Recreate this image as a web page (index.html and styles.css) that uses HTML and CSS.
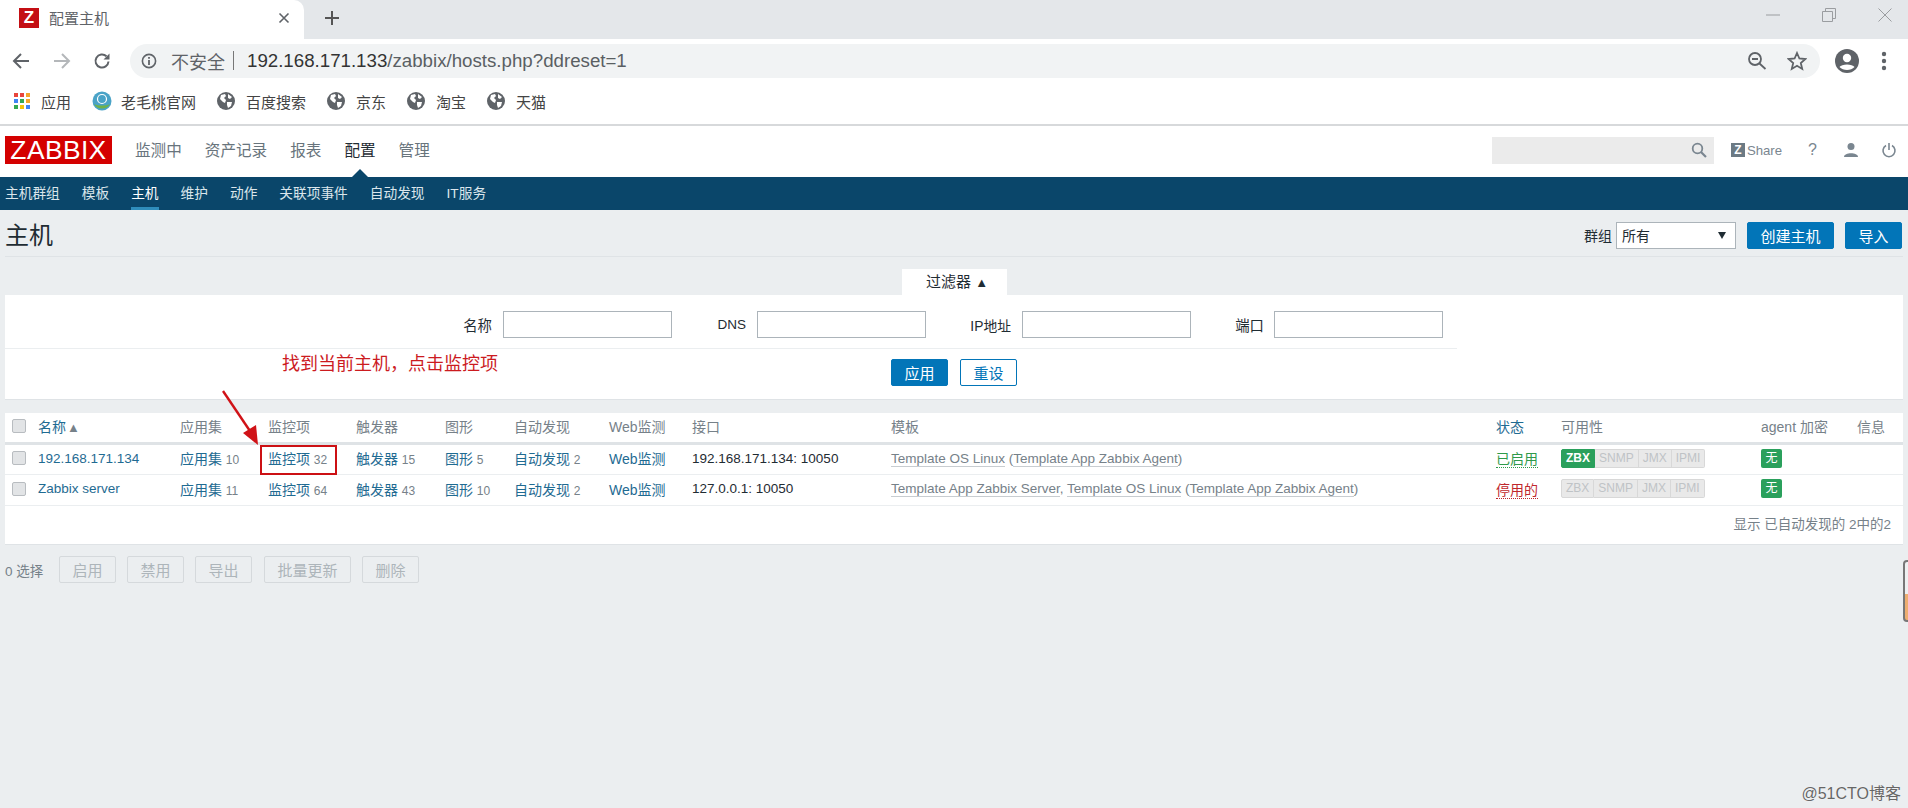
FILE: index.html
```html
<!DOCTYPE html>
<html lang="zh">
<head>
<meta charset="utf-8">
<title>配置主机</title>
<link rel="stylesheet" href="styles.css">
</head>
<body>
<div class="tabstrip">
  <div class="tab">
    <span class="favicon">Z</span>
    <span class="tab-title">配置主机</span>
    <svg class="tab-close" width="12" height="12" viewBox="0 0 12 12"><path d="M1.5 1.5l9 9M10.5 1.5l-9 9" stroke="#5f6368" stroke-width="1.6"/></svg>
  </div>
  <svg class="tab-new" width="16" height="16" viewBox="0 0 16 16"><path d="M8 1v14M1 8h14" stroke="#555" stroke-width="2"/></svg>
  <div class="win-controls">
    <svg width="14" height="14" viewBox="0 0 14 14"><path d="M0 7h14" stroke="#9a9da0" stroke-width="1"/></svg>
    <svg width="14" height="14" viewBox="0 0 14 14"><path d="M.5 3.500h10v10H.5zM3.500 3.500v-3h10v10h-3" fill="none" stroke="#9a9da0"/></svg>
    <svg width="14" height="14" viewBox="0 0 14 14"><path d="M.5.5l13 13M13.500.5l-13 13" stroke="#9a9da0"/></svg>
  </div>
</div>
<div class="toolbar">
  <svg class="tool" width="18" height="18" viewBox="0 0 18 18"><path d="M17 9H2M9 2L2 9l7 7" fill="none" stroke="#5f6368" stroke-width="2"/></svg>
  <svg class="tool" width="18" height="18" viewBox="0 0 18 18"><path d="M1 9h15M9 2l7 7-7 7" fill="none" stroke="#b4b7ba" stroke-width="2"/></svg>
  <svg class="tool" width="18" height="18" viewBox="0 0 18 18"><path d="M15.5 9.5a6.5 6.5 0 1 1-2-5.2" fill="none" stroke="#5f6368" stroke-width="2"/><path d="M16.5 1.5v6h-6z" fill="#5f6368"/></svg>
  <div class="omnibox">
    <svg width="16" height="16" viewBox="0 0 16 16"><circle cx="8" cy="8" r="6.6" fill="none" stroke="#5f6368" stroke-width="1.6"/><path d="M8 7v5M8 4v1.8" stroke="#5f6368" stroke-width="1.8"/></svg>
    <span class="insecure">不安全</span>
    <span class="omni-sep"></span>
    <span class="url">192.168.171.133<span class="url-path">/zabbix/hosts.php?ddreset=1</span></span>
    <svg class="omni-zoom" width="20" height="20" viewBox="0 0 20 20"><circle cx="8" cy="8" r="6" fill="none" stroke="#5f6368" stroke-width="1.8"/><path d="M5 8h6M12.5 12.5l6 5.5" stroke="#5f6368" stroke-width="1.8"/></svg>
    <svg class="omni-star" width="20" height="20" viewBox="0 0 20 20"><path d="M10 2l2.4 5.5 6 .5-4.6 4 1.4 5.9L10 14.800l-5.200 3.100L6.200 12 1.600 8l6-.5z" fill="none" stroke="#5f6368" stroke-width="1.800"/></svg>
  </div>
  <svg class="profile" width="24" height="24" viewBox="0 0 24 24"><circle cx="12" cy="12" r="12" fill="#5f6368"/><circle cx="12" cy="9" r="4.200" fill="#fff"/><path d="M4.500 18c2-3.500 13-3.500 15 0-3.500 4-11.500 4-15 0z" fill="#fff"/></svg>
  <svg class="kebab" width="6" height="20" viewBox="0 0 6 20"><circle cx="3" cy="3" r="2.200" fill="#5f6368"/><circle cx="3" cy="10" r="2.200" fill="#5f6368"/><circle cx="3" cy="17" r="2.200" fill="#5f6368"/></svg>
</div>
<div class="bookmarks">
  <span class="bm">
    <svg width="16" height="16" viewBox="0 0 16 16">
      <rect width="4" height="4" fill="#e8453c"/><rect x="6" width="4" height="4" fill="#e8453c"/><rect x="12" width="4" height="4" fill="#f4a62a"/>
      <rect y="6" width="4" height="4" fill="#3f84f4"/><rect x="6" y="6" width="4" height="4" fill="#34a853"/><rect x="12" y="6" width="4" height="4" fill="#f4a62a"/>
      <rect y="12" width="4" height="4" fill="#34a853"/><rect x="6" y="12" width="4" height="4" fill="#f4c20d"/><rect x="12" y="12" width="4" height="4" fill="#3f84f4"/>
    </svg>应用</span>
  <span class="bm">
    <svg width="20" height="20" viewBox="0 0 20 20"><circle cx="10" cy="10" r="9.500" fill="#4aa3c7"/><path d="M2 13c3 6 13 6 16 0-4 2-12 2-16 0z" fill="#6fb24a"/><circle cx="10" cy="8" r="4.500" fill="none" stroke="#fff" stroke-width="1.200"/></svg>老毛桃官网</span>
  <span class="bm"><svg class="globe" width="18" height="18" viewBox="0 0 18 18"><circle cx="9" cy="9" r="9" fill="#5f6368"/><path d="M4 3l4-1 1 2-2 2 2 2-1 3-2-1-3-3zM11 2l4 3-2 2-2-1zM10 10h5l-1 4-3 2-1-3z" fill="#fff"/></svg>百度搜索</span>
  <span class="bm"><svg class="globe" width="18" height="18" viewBox="0 0 18 18"><circle cx="9" cy="9" r="9" fill="#5f6368"/><path d="M4 3l4-1 1 2-2 2 2 2-1 3-2-1-3-3zM11 2l4 3-2 2-2-1zM10 10h5l-1 4-3 2-1-3z" fill="#fff"/></svg>京东</span>
  <span class="bm"><svg class="globe" width="18" height="18" viewBox="0 0 18 18"><circle cx="9" cy="9" r="9" fill="#5f6368"/><path d="M4 3l4-1 1 2-2 2 2 2-1 3-2-1-3-3zM11 2l4 3-2 2-2-1zM10 10h5l-1 4-3 2-1-3z" fill="#fff"/></svg>淘宝</span>
  <span class="bm"><svg class="globe" width="18" height="18" viewBox="0 0 18 18"><circle cx="9" cy="9" r="9" fill="#5f6368"/><path d="M4 3l4-1 1 2-2 2 2 2-1 3-2-1-3-3zM11 2l4 3-2 2-2-1zM10 10h5l-1 4-3 2-1-3z" fill="#fff"/></svg>天猫</span>
</div>

<header class="topnav">
  <span class="logo">ZABBIX</span>
  <nav class="mainmenu">
    <a>监测中</a><a>资产记录</a><a>报表</a><a class="on">配置</a><a>管理</a>
  </nav>
  <div class="searchbox">
    <svg width="16" height="16" viewBox="0 0 16 16"><circle cx="6.500" cy="6.500" r="4.800" fill="none" stroke="#7a8690" stroke-width="1.800"/><path d="M10 10l5 5" stroke="#7a8690" stroke-width="2.200"/></svg>
  </div>
  <span class="share"><span class="share-z">Z</span>Share</span>
  <span class="help">?</span>
  <svg class="hicon-user" width="16" height="16" viewBox="0 0 16 16"><circle cx="8" cy="4.500" r="3.500" fill="#7a8690"/><path d="M1 15c0-5 14-5 14 0z" fill="#7a8690"/></svg>
  <svg class="hicon-power" width="16" height="16" viewBox="0 0 16 16"><path d="M5 3.500a6 6 0 1 0 6 0" fill="none" stroke="#7a8690" stroke-width="1.600"/><path d="M8 1v7" stroke="#7a8690" stroke-width="1.600"/></svg>
</header>
<nav class="subnav">
  <a>主机群组</a><a>模板</a><a class="on">主机</a><a>维护</a><a>动作</a><a>关联项事件</a><a>自动发现</a><a>IT服务</a>
</nav>

<main class="page">
  <div class="titlebar">
    <h1>主机</h1>
    <div class="title-actions">
      <label class="group-label">群组</label>
      <div class="select"><span>所有</span><i class="select-caret"></i></div>
      <button class="btn wide">创建主机</button>
      <button class="btn">导入</button>
    </div>
  </div>

  <div class="filter-tabrow"><div class="filter-tab">过滤器 <span class="tab-arrow">▲</span></div></div>
  <section class="filter">
    <div class="filter-fields">
      <label class="f-name">名称</label><span class="input"></span>
      <label class="f-dns">DNS</label><span class="input"></span>
      <label class="f-ip">IP地址</label><span class="input"></span>
      <label class="f-port">端口</label><span class="input"></span>
    </div>
    <div class="filter-actions">
      <button class="btn apply">应用</button>
      <button class="btn ghost">重设</button>
    </div>
  </section>

  <section class="hosts">
    <table>
      <colgroup>
        <col class="c1"><col class="c2"><col class="c3"><col class="c4"><col class="c5"><col class="c6"><col class="c7"><col class="c8"><col class="c9"><col class="c10"><col class="c11"><col class="c12"><col class="c13"><col class="c14">
      </colgroup>
      <thead>
        <tr>
          <th class="chk"><span class="checkbox"></span></th>
          <th class="sorted">名称<span class="sort">▲</span></th>
          <th>应用集</th><th>监控项</th><th>触发器</th><th>图形</th><th>自动发现</th><th>Web监测</th><th>接口</th><th>模板</th>
          <th class="sorted">状态</th><th>可用性</th><th>agent 加密</th><th>信息</th>
        </tr>
      </thead>
      <tbody>
        <tr>
          <td class="chk"><span class="checkbox"></span></td>
          <td><a class="host">192.168.171.134</a></td>
          <td><a>应用集</a> <small>10</small></td>
          <td><a>监控项</a> <small>32</small></td>
          <td><a>触发器</a> <small>15</small></td>
          <td><a>图形</a> <small>5</small></td>
          <td><a>自动发现</a> <small>2</small></td>
          <td><a>Web监测</a></td>
          <td>192.168.171.134: 10050</td>
          <td class="tpl"><u>Template OS Linux</u> (<u>Template App Zabbix Agent</u>)</td>
          <td><span class="status ok">已启用</span></td>
          <td><span class="avail"><b class="on">ZBX</b><b>SNMP</b><b>JMX</b><b>IPMI</b></span></td>
          <td><span class="enc">无</span></td>
          <td></td>
        </tr>
        <tr>
          <td class="chk"><span class="checkbox"></span></td>
          <td><a class="host">Zabbix server</a></td>
          <td><a>应用集</a> <small>11</small></td>
          <td><a>监控项</a> <small>64</small></td>
          <td><a>触发器</a> <small>43</small></td>
          <td><a>图形</a> <small>10</small></td>
          <td><a>自动发现</a> <small>2</small></td>
          <td><a>Web监测</a></td>
          <td>127.0.0.1: 10050</td>
          <td class="tpl"><u>Template App Zabbix Server</u>, <u>Template OS Linux</u> (<u>Template App Zabbix Agent</u>)</td>
          <td><span class="status off">停用的</span></td>
          <td><span class="avail"><b>ZBX</b><b>SNMP</b><b>JMX</b><b>IPMI</b></span></td>
          <td><span class="enc">无</span></td>
          <td></td>
        </tr>
      </tbody>
    </table>
    <div class="paging">显示 已自动发现的 2中的2</div>
  </section>

  <div class="bulk">
    <span class="selected">0 选择</span>
    <button class="btn off">启用</button>
    <button class="btn off">禁用</button>
    <button class="btn off">导出</button>
    <button class="btn off w4">批量更新</button>
    <button class="btn off">删除</button>
  </div>
</main>

<div class="anno-text">找到当前主机，点击监控项</div>
<div class="anno-box"></div>
<svg class="anno-arrow" width="44" height="60" viewBox="0 0 44 60"><path d="M3 2l29 43" stroke="#d01217" stroke-width="2.400"/><path d="M38 56L23 44l13-8z" fill="#d01217"/></svg>
<div class="edge-widget"></div>
<div class="watermark">@51CTO博客</div>
</body>
</html>
```
FILE: styles.css
```css
* { box-sizing: border-box; }
html, body { margin: 0; padding: 0; }
body {
  width: 1908px;
  height: 808px;
  overflow: hidden;
  position: relative;
  background: #ebeef0;
  font-family: "Liberation Sans", "Noto Sans CJK SC", sans-serif;
  font-size: 13.5px;
  color: #1f2c33;
}
a { color: #1f6b92; text-decoration: none; }
button { font-family: inherit; }

/* browser chrome */
.tabstrip { height: 39px; background: #e4e7ea; display: flex; align-items: flex-start; position: relative; }
.tab { width: 304px; height: 39px; background: #fff; border-radius: 0 10px 0 0; display: flex; align-items: center; padding: 0 0 5px 19px; position: relative; }
.favicon { width: 20px; height: 20px; margin-top: 2px; background: #c40f14; color: #fff; font-weight: 700; font-size: 17px; line-height: 20px; text-align: center; }
.tab-title { margin-left: 10px; font-size: 15px; color: #5f6368; }
.tab-close { position: absolute; left: 278px; top: 12px; }
.tab-new { margin: 10px 0 0 20px; }
.win-controls { margin-left: auto; width: 126px; padding-top: 8px; margin-right: 16px; display: flex; justify-content: space-between; }
.toolbar { height: 43px; background: #fff; display: flex; align-items: center; padding-left: 12px; }
.tool { margin-right: 23px; }
.tool:nth-child(3) { margin-left: -1px; }
.omnibox { width: 1690px; height: 34px; margin-left: -4px; background: #f1f3f4; border-radius: 17px; display: flex; align-items: center; padding-left: 11px; }
.insecure { margin-left: 14px; font-size: 18px; color: #5f6368; }
.omni-sep { width: 1px; height: 19px; background: #777; margin: 0 13px 0 8px; }
.url { font-size: 18.700px; color: #333; white-space: nowrap; }
.url-path { color: #5a5f63; }
.omni-zoom { margin-left: auto; }
.omni-star { margin: 0 13px 0 20px; }
.profile { margin-left: 15px; }
.kebab { margin-left: 22px; }
.bookmarks { height: 42px; background: #fff; display: flex; align-items: center; padding: 0 0 4px 14px; font-size: 15px; color: #444; }
.bm { display: flex; align-items: center; gap: 11px; margin-right: 21px; white-space: nowrap; }
.bm:nth-child(2) { gap: 9px; }

/* zabbix header */
.topnav { height: 53px; border-top: 2px solid #d7d9db; background: #fff; display: flex; align-items: center; position: relative; padding: 0 0 3px 5px; }
.logo { width: 107px; height: 28px; background: #d40000; color: #fff; font-size: 26.400px; line-height: 28px; text-align: center; letter-spacing: .4px; }
.mainmenu { display: flex; gap: 23px; margin-left: 23px; font-size: 15.600px; padding-bottom: 2px; }
.mainmenu a { color: #68747c; }
.mainmenu a.on { color: #1f2c33; position: relative; }
.mainmenu a.on::after { content: ""; position: absolute; left: 50%; margin-left: -9px; top: 31px; border: 9px solid transparent; border-top: 0; border-bottom-color: #0a466a; }
.searchbox { width: 222px; height: 27px; margin-left: auto; margin-right: -1px; background: #ebebeb; display: flex; align-items: center; justify-content: flex-end; padding-right: 7px; }
.share { margin-left: 18px; font-size: 13.200px; color: #7a8690; display: flex; align-items: center; }
.share-z { width: 14px; height: 14px; background: #6c7a84; color: #fff; font-weight: 700; font-size: 12px; line-height: 14px; text-align: center; margin-right: 2px; }
.help { margin-left: 26px; font-size: 16px; color: #7a8690; }
.hicon-user { margin-left: 26px; }
.hicon-power { margin: 0 11px 0 22px; }
.subnav { height: 33px; background: #0a466a; display: flex; align-items: center; gap: 22px; padding-left: 5px; font-size: 13.700px; }
.subnav a { color: #dbe6ec; height: 33px; line-height: 33px; }
.subnav a.on { color: #fff; border-bottom: 3px solid #2f8dbb; }

/* page */
.titlebar { height: 47px; margin: 0 5px; border-bottom: 1px solid #dfe3e6; display: flex; align-items: center; justify-content: space-between; }
h1 { margin: 0; font-size: 24px; font-weight: 400; color: #1f2c33; }
.title-actions { display: flex; align-items: center; margin: 4px 1px 0 0; }
.group-label { margin-right: 4px; color: #1f2c33; font-size: 14px; }
.select { width: 120px; height: 27px; background: #fff; border: 1px solid #acb4ba; display: flex; align-items: center; justify-content: space-between; padding: 0 5px; margin-right: 11px; font-size: 14px; }
.select-caret { width: 0; height: 0; border: 4px solid transparent; border-bottom: 0; border-top: 7px solid #1f2c33; margin-right: 4px; }
.btn { height: 27px; width: 57px; padding: 0; background: #0275b8; border: 1px solid #0275b8; border-radius: 2px; color: #fff; font-size: 15px; }
.btn.wide { width: 87px; margin-right: 11px; }

.filter-tabrow { display: flex; justify-content: center; margin-top: 12px; }
.filter-tab { width: 105px; height: 26px; background: #fff; text-align: center; line-height: 26px; font-size: 15px; color: #1f2c33; padding-left: 6px; }
.tab-arrow { font-size: 13px; }
.filter { margin: 0 5px; height: 105px; background: #fff; border-bottom: 1px solid #dfe3e6; padding-top: 16px; }
.filter-fields { display: flex; align-items: center; width: 1452px; height: 27px; font-size: 14.400px; }
.filter-fields label { text-align: right; color: #1f2c33; padding-right: 11px; }
.f-name { width: 498px; }
.filter-fields .f-dns { width: 85px; font-size: 13.500px; }
.filter-fields .f-ip { width: 96px; font-size: 13.800px; }
.f-port { width: 84px; }
.input { width: 169px; height: 27px; background: #fff; border: 1px solid #acb4ba; }
.f-port + .input { margin-left: -1px; }
.filter-actions { width: 1452px; margin-top: 10px; padding-top: 10px; border-top: 1px solid #ebeef0; display: flex; padding-left: 886px; gap: 12px; }
.btn.ghost { background: #fff; color: #0275b8; border-color: #0275b8; }

.hosts { margin: 13px 5px 0; background: #fff; border-bottom: 1px solid #dfe3e6; height: 132px; }
table { border-collapse: collapse; table-layout: fixed; width: 1898px; }
.c1 { width: 33px; } .c2 { width: 142px; } .c3 { width: 88px; } .c4 { width: 88px; } .c5 { width: 89px; } .c6 { width: 69px; } .c7 { width: 95px; } .c8 { width: 83px; } .c9 { width: 199px; } .c10 { width: 605px; } .c11 { width: 65px; } .c12 { width: 200px; } .c13 { width: 96px; } .c14 { width: 46px; }
th, td { padding: 0; text-align: left; white-space: nowrap; font-weight: 400; }
th { height: 30px; color: #768189; border-bottom: 3px solid #dfe3e6; font-size: 14px; padding-bottom: 2px; }
th.sorted { color: #1f6b92; }
.sort { font-size: 13px; color: #768189; margin-left: 1px; }
td { height: 31px; border-bottom: 1px solid #ebeef0; padding-bottom: 2px; }
td a { font-size: 14px; }
td a.host { font-size: 13.500px; }
small { font-size: 12px; color: #768189; }
.chk { padding-left: 7px; }
.checkbox { display: block; width: 14px; height: 14px; background: #e2e4e6; border: 1px solid #b8bcc0; border-radius: 2px; }
.tpl { color: #768189; }
.tpl u { text-decoration: none; border-bottom: 1px solid #c8cdd1; }
.status { border-bottom: 1px dotted; font-size: 14px; }
.status.ok { color: #2f9a4b; }
.status.off { color: #c0272d; }
.avail { display: inline-flex; height: 19px; font-size: 12px; vertical-align: middle; }
.avail b { font-weight: 400; height: 19px; line-height: 17px; padding: 0 4px; background: #e9e9e9; border: 1px solid #d8d8d8; border-left-width: 0; color: #bfc3c6; }
.avail b:first-child { border-left-width: 1px; border-radius: 2px 0 0 2px; }
.avail b:last-child { border-radius: 0 2px 2px 0; }
.avail b.on { background: #2aa05c; border-color: #2aa05c; color: #fff; font-weight: 700; }
.enc { display: inline-block; width: 21px; height: 19px; background: #2aa05c; color: #fff; font-size: 12px; line-height: 19px; text-align: center; border-radius: 2px; vertical-align: middle; }
.paging { height: 38px; line-height: 38px; text-align: right; padding-right: 12px; color: #768189; }

.bulk { display: flex; align-items: center; margin-top: 11px; padding-left: 5px; gap: 11px; }
.selected { color: #768189; width: 43px; }
.btn.off { width: 57px; background: #ebeef0; border: 1px solid #d5d9dc; color: #adb5ba; }
.btn.off.w4 { width: 87px; margin-left: 1px; }

/* overlays */
.anno-text { position: absolute; left: 282px; top: 349px; font-size: 18px; color: #cc1b1f; white-space: nowrap; }
.anno-box { position: absolute; left: 260px; top: 445px; width: 77px; height: 30px; border: 2px solid #cc1014; }
.anno-arrow { position: absolute; left: 220px; top: 389px; }
.edge-widget { position: absolute; left: 1903px; top: 560px; width: 10px; height: 62px; border: 2px solid #777; border-radius: 4px 0 0 4px; background: linear-gradient(#eef0f1 55%, #eeae70 55%); }
.watermark { position: absolute; right: 7px; top: 780px; font-size: 16px; color: #666; text-shadow: 0 0 1px #fff; }
```
